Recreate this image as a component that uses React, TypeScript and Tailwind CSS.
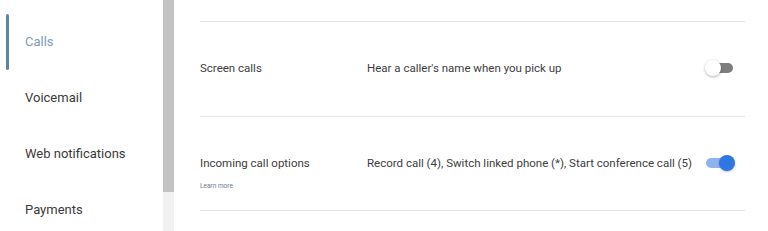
const font = { fontFamily: 'Roboto, "Liberation Sans", sans-serif' };

const navItems = ['Calls', 'Voicemail', 'Web notifications', 'Payments'];

function Toggle({ on }: { on: boolean }) {
  if (on) {
    return (
      <div className="relative w-[30px] h-[18px] flex items-center">
        <div className="ml-[1px] w-[24px] h-[10px] rounded-full bg-[#8fb3ef]" />
        <div className="absolute right-0 top-[1px] w-[16px] h-[16px] rounded-full bg-[#2f77e2] shadow-[0_1px_2px_rgba(0,0,0,0.25)]" />
      </div>
    );
  }
  return (
    <div className="relative w-[30px] h-[18px] flex items-center">
      <div className="ml-[6px] w-[22px] h-[10px] rounded-full bg-[#7e7e7e]" />
      <div className="absolute left-0 top-[1px] w-[16px] h-[16px] rounded-full bg-white shadow-[0_1px_3px_rgba(0,0,0,0.3)]" />
    </div>
  );
}

function Row({
  label,
  desc,
  on,
  learnMore,
  h,
}: {
  label: string;
  desc: string;
  on: boolean;
  learnMore?: boolean;
  h: string;
}) {
  return (
    <div className={`${h} border-b border-[#e6e6e6] flex items-start pt-[37px]`}>
      <div className="w-[167px] shrink-0">
        <div className="text-[11.5px] leading-[18px] text-[#3d3d3d]">{label}</div>
        {learnMore && (
          <div className="mt-[9px] text-[6.5px] leading-[10px] text-[#6b7c90]">Learn more</div>
        )}
      </div>
      <div className="flex-1 text-[11.5px] leading-[18px] text-[#3d3d3d]">{desc}</div>
      <div className="mr-[10px]">
        <Toggle on={on} />
      </div>
    </div>
  );
}

export default function App() {
  return (
    <div className="w-[768px] h-[231px] overflow-hidden bg-white flex" style={font}>
      <aside className="w-[163px] shrink-0 pt-[14px]">
        {navItems.map((item, i) => (
          <div key={item} className="relative h-[56px] flex items-center pl-[25px]">
            {i === 0 && (
              <div className="absolute left-[6px] top-0 bottom-0 w-[3px] bg-[#5d84a6] rounded-sm" />
            )}
            <span
              className={
                i === 0
                  ? 'text-[13px] text-[#7e9cb6]'
                  : 'text-[13px] text-[#3a3a3a]'
              }
            >
              {item}
            </span>
          </div>
        ))}
      </aside>
      <div className="w-[11px] shrink-0 flex flex-col">
        <div className="h-[192px] bg-[#c3c3c3]" />
        <div className="flex-1 bg-[#f1f1f1]" />
      </div>
      <main className="flex-1 pl-[26px] pr-[23px]">
        <div className="h-[22px] border-b border-[#e6e6e6]" />
        <Row h="h-[95px]" label="Screen calls" desc="Hear a caller's name when you pick up" on={false} />
        <Row
          h="h-[94px]"
          label="Incoming call options"
          desc="Record call (4), Switch linked phone (*), Start conference call (5)"
          on
          learnMore
        />
      </main>
    </div>
  );
}
